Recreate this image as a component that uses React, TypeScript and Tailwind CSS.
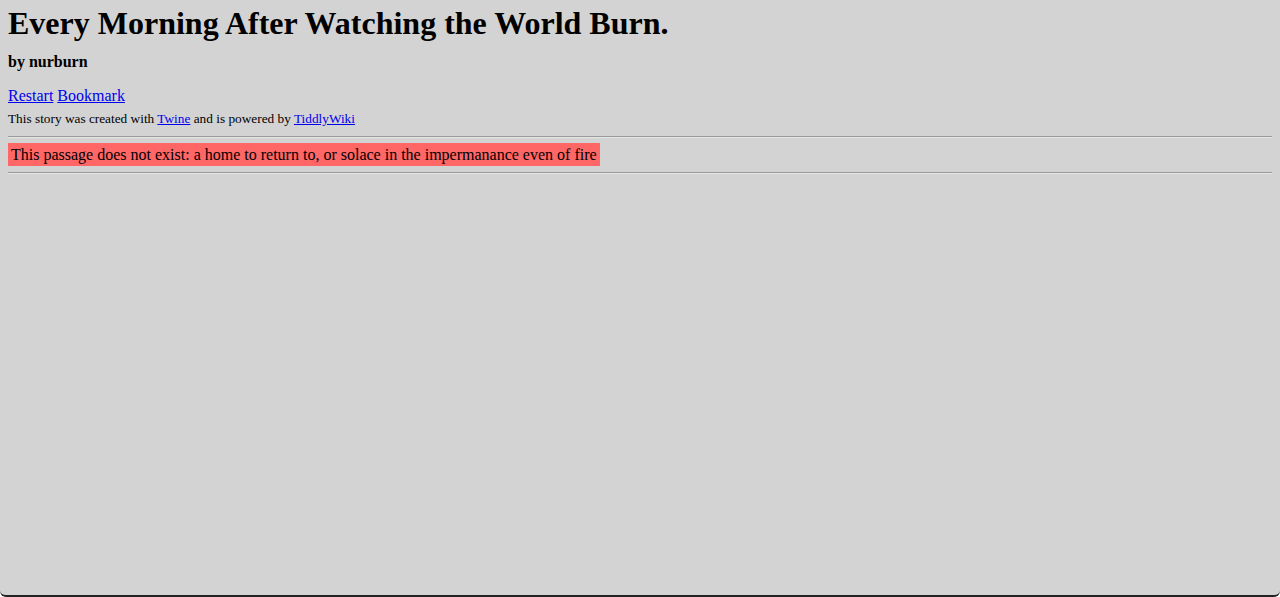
import React from "react";

export default function App() {
  return (
    <div
      className="min-h-[597px] bg-[#d3d3d3] text-black px-2 pt-[1px] rounded-b-[6px] border-b-2 border-[#222]"
      style={{ fontFamily: '"Liberation Serif", "Times New Roman", serif' }}
    >
      <h1 className="text-[32px] font-bold leading-[37px] mt-[4px]">
        Every Morning After Watching the World Burn.
      </h1>
      <h3 className="text-[16px] font-bold leading-[18px] mt-[11px]">by nurburn</h3>
      <div className="mt-[16px] text-[16px] leading-[18px]">
        <a href="#" className="text-[#0000ee] underline">Restart</a>{" "}
        <a href="#" className="text-[#0000ee] underline">Bookmark</a>
      </div>
      <div className="mt-[6px] text-[13.3px] leading-[15px]">
        This story was created with{" "}
        <a href="#" className="text-[#0000ee] underline">Twine</a> and is powered by{" "}
        <a href="#" className="text-[#0000ee] underline">TiddlyWiki</a>
      </div>
      <hr className="mt-[10px] mr-0 border-t border-t-[#9a9a9a] border-b border-b-[#e6e6e6]" />
      <div className="mt-[5px] mb-[5px]">
        <span className="inline-block bg-[#ff6666] pl-[3px] pr-[3px] text-[16px] leading-[23px]">
          This passage does not exist: a home to return to, or solace in the impermanance even of fire
        </span>
      </div>
      <hr className="border-t border-t-[#9a9a9a] border-b border-b-[#e6e6e6]" />
    </div>
  );
}
